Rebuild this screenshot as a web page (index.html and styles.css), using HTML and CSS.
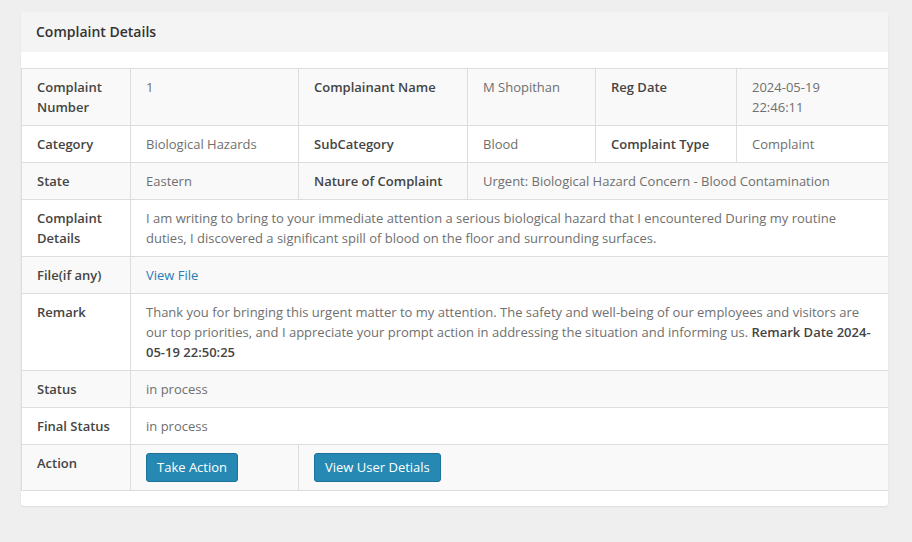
FILE: index.html
```html
<!DOCTYPE html>
<html>
<head>
<meta charset="utf-8">
<link rel="stylesheet" href="styles.css">
</head>
<body>
<div class="panel">
  <div class="panel-heading">Complaint Details</div>
  <div class="panel-body">
    <table class="details">
      <colgroup>
        <col class="c1"><col class="c2"><col class="c3"><col class="c4"><col class="c5"><col class="c6">
      </colgroup>
      <tbody>
        <tr>
          <th>Complaint Number</th><td>1</td>
          <th>Complainant Name</th><td>M Shopithan</td>
          <th>Reg Date</th><td>2024-05-19 22:46:11</td>
        </tr>
        <tr>
          <th>Category</th><td>Biological Hazards</td>
          <th>SubCategory</th><td>Blood</td>
          <th>Complaint Type</th><td>Complaint</td>
        </tr>
        <tr>
          <th>State</th><td>Eastern</td>
          <th>Nature of Complaint</th><td colspan="3">Urgent: Biological Hazard Concern - Blood Contamination</td>
        </tr>
        <tr>
          <th>Complaint Details</th>
          <td colspan="5">I am writing to bring to your immediate attention a serious biological hazard that I encountered During my routine duties, I discovered a significant spill of blood on the floor and surrounding surfaces.</td>
        </tr>
        <tr>
          <th>File(if any)</th>
          <td colspan="5"><a class="link" href="#">View File</a></td>
        </tr>
        <tr>
          <th>Remark</th>
          <td colspan="5">Thank you for bringing this urgent matter to my attention. The safety and well-being of our employees and visitors are our top priorities, and I appreciate your prompt action in addressing the situation and informing us. <b>Remark Date 2024-05-19 22:50:25</b></td>
        </tr>
        <tr>
          <th>Status</th>
          <td colspan="5">in process</td>
        </tr>
        <tr>
          <th>Final Status</th>
          <td colspan="5">in process</td>
        </tr>
        <tr>
          <th>Action</th>
          <td><button class="btn">Take Action</button></td>
          <td colspan="4"><button class="btn">View User Detials</button></td>
        </tr>
      </tbody>
    </table>
  </div>
</div>
</body>
</html>
```

FILE: styles.css
```css
html, body {
  margin: 0;
  padding: 0;
}
body {
  background: #efefef;
  font-family: "Open Sans", "Liberation Sans", sans-serif;
  font-size: 13px;
  line-height: 20px;
  color: #666;
  padding: 12px 24px 0 21px;
  height: 542px;
  box-sizing: border-box;
}
.panel {
  width: 867px;
  background: #fff;
  border-radius: 3px;
  box-shadow: 0 1px 2px rgba(0,0,0,0.08);
  overflow: hidden;
}
.panel-heading {
  background: #f4f4f4;
  height: 40px;
  line-height: 40px;
  padding: 0 15px;
  font-size: 14px;
  font-weight: 600;
  color: #333;
}
.panel-body {
  padding: 16px 0 15px;
}
.details {
  width: 867px;
  border-collapse: collapse;
  table-layout: fixed;
}
.c1 { width: 109px; }
.c2 { width: 168px; }
.c3 { width: 169px; }
.c4 { width: 128px; }
.c5 { width: 141px; }
.c6 { width: 152px; }
.details th, .details td {
  border: 1px solid #ddd;
  padding: 8px 15px;
  vertical-align: top;
  text-align: left;
}
.details th {
  font-weight: 600;
  color: #444;
}
.details td {
  font-weight: 400;
  color: #6f6f6f;
}
.details td b {
  font-weight: 600;
  color: #444;
}
.details tr:nth-child(odd) {
  background: #f9f9f9;
}
.link {
  color: #2a7db5;
  text-decoration: none;
}
.btn {
  display: inline-block;
  vertical-align: top;
  font-family: "Open Sans", "Liberation Sans", sans-serif;
  font-size: 13px;
  line-height: 18px;
  color: #fff;
  background: #2589b3;
  border: 1px solid #1d7299;
  border-radius: 3px;
  padding: 4px 10px 5px;
  margin: 0;
  cursor: pointer;
}
```
